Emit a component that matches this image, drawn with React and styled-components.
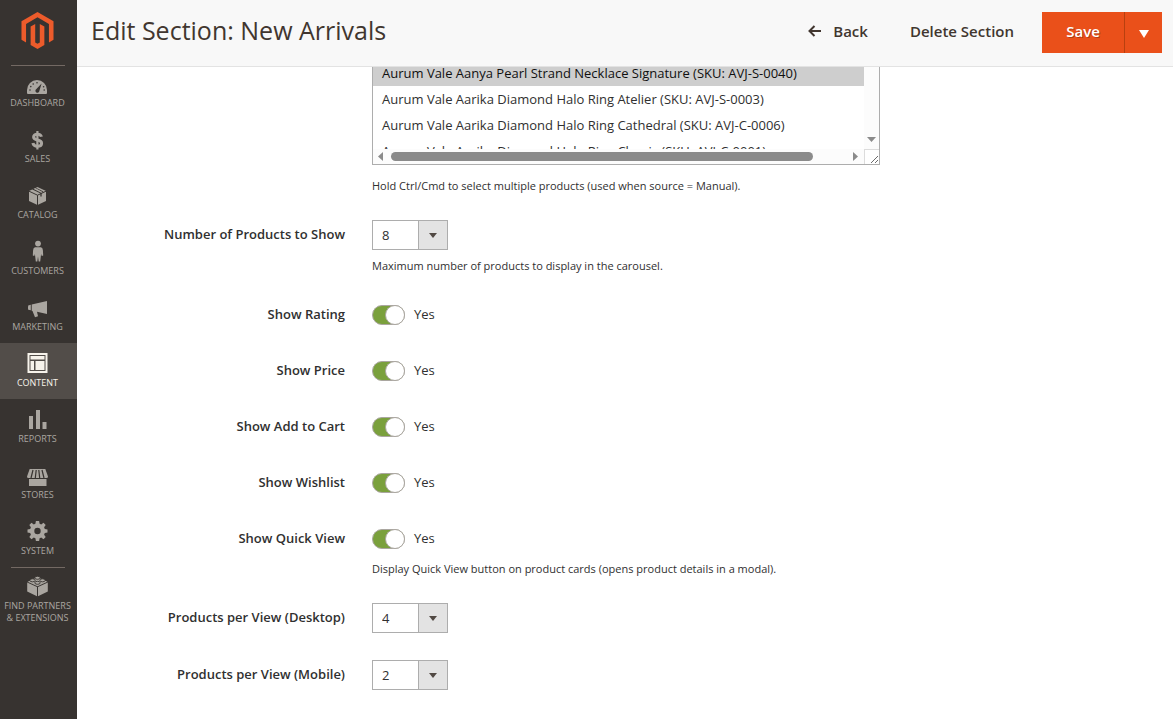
import styled, { createGlobalStyle } from "styled-components";
import { useState } from "react";

const products = [
  { sku: "AVJ-S-0040", name: "Aurum Vale Aanya Pearl Strand Necklace Signature" },
  { sku: "AVJ-S-0003", name: "Aurum Vale Aarika Diamond Halo Ring Atelier" },
  { sku: "AVJ-C-0006", name: "Aurum Vale Aarika Diamond Halo Ring Cathedral" },
  { sku: "AVJ-C-0001", name: "Aurum Vale Aarika Diamond Halo Ring Classic" },
];

const toggles = [
  { id: "show_rating", label: "Show Rating" },
  { id: "show_price", label: "Show Price" },
  { id: "show_cart", label: "Show Add to Cart" },
  { id: "show_wishlist", label: "Show Wishlist" },
  {
    id: "show_quick_view",
    label: "Show Quick View",
    note: "Display Quick View button on product cards (opens product details in a modal).",
  },
];

const menu = [
  {
    label: "Dashboard",
    icon: (
      <>
        <path d="M0 21V18a10 10 0 0 1 20 0v3q0 1-1 1H1q-1 0-1-1z" />
        <g fill="#373330">
          <circle cx="3" cy="18" r=".8" />
          <circle cx="3.8" cy="14.6" r=".8" />
          <circle cx="6.2" cy="12" r=".8" />
          <circle cx="10" cy="10.8" r=".8" />
          <circle cx="16.6" cy="14.8" r=".8" />
          <circle cx="17.2" cy="18" r=".8" />
          <path d="M14.6 11.6l-2.2 7.2a2 2 0 1 1-3-1.8z" />
        </g>
      </>
    ),
  },
  {
    label: "Sales",
    icon: (
      <g fill="none" stroke="currentColor">
        <path strokeWidth="2.2" d="M10.4 3v18.500" />
        <path strokeWidth="3" d="M14.400 8.800C14 6.800 12.600 6.200 10.400 6.200 8 6.200 6.600 7.300 6.600 9c0 4.200 8 1.800 8 6.200 0 1.900-1.700 3-4.200 3-2.600 0-4.100-1.100-4.500-3.200" />
      </g>
    ),
  },
  {
    label: "Catalog",
    icon: (
      <>
        <path d="M10.500 3L19 7v10l-8.500 4L2 17V7z" />
        <g fill="none" stroke="#373330">
          <path d="M2 7.200l8.500 4 8.500-4M10.500 11.200V21" />
          <path strokeWidth="1.300" d="M5.600 4.800l8.400 4.200v3.500M7.700 3.800l8.300 4.200" />
        </g>
        <path d="M6.700 4.900l1.700-.8L15.500 8l-1.400.8z" />
      </>
    ),
  },
  {
    label: "Customers",
    icon: (
      <>
        <circle cx="11" cy="3.600" r="2.900" />
        <path d="M8 7.200h6q1.800.3 1.900 3l.3 5.200-1.500.6-.6-2-.9 7.600h-1.500l-.7-5-.7 5H8.800L7.900 14l-.6 2-1.500-.6.300-5.200q.1-2.700 1.900-3z" />
      </>
    ),
  },
  {
    label: "Marketing",
    icon: (
      <path d="M1.200 9.400l2.600-.6v5.400l-2.600-.5q-.4-2.200 0-4.300zM4.700 8.500l15.300-3.500v13l-10-2.300 1 4.600-3 1-2.500-6.400-.8-.2z" />
    ),
  },
  {
    label: "Content",
    icon: (
      <>
        <path fillRule="evenodd" d="M.5 1h20v20H.5zM2.500 3v16h16V3z" />
        <path d="M3.500 4h14v3.500h-14zM3.500 9h3.500v9H3.500zM8.500 9h9v9h-9z" />
      </>
    ),
  },
  {
    label: "Reports",
    icon: <path d="M2 8h4v13H2zM9 2h4v19H9zM15.500 14h4v7h-4z" />,
  },
  {
    label: "Stores",
    icon: (
      <>
        <path d="M2.700 5h15.600l2.700 7.500q0 1.500-1.500 1.500h-18Q0 14 0 12.500z" />
        <path fill="none" stroke="#373330" strokeWidth="1.200" d="M6 6l-2 8M9.200 6l-.9 8M11.800 6l.9 8M15 6l2 8" />
        <path d="M2 15h17.500v7H2z" />
      </>
    ),
  },
  {
    label: "System",
    icon: (
      <path
        fillRule="evenodd"
        d="M8.900 1h3.200l.5 2.700 1.600.7L16.500 2.800l2.200 2.200-1.600 2.300.7 1.600 2.700.5v3.200l-2.700.5-.7 1.600 1.600 2.300-2.200 2.200-2.300-1.600-1.600.7-.5 2.700H8.900l-.5-2.700-1.600-.7-2.300 1.600L2.300 17l1.600-2.300-.7-1.600L.5 12.600V9.400l2.700-.5.7-1.600L2.300 5l2.200-2.200 2.300 1.600 1.600-.7zM10.500 7.800a3.200 3.200 0 1 0 0 6.400 3.200 3.200 0 0 0 0-6.400z"
      />
    ),
  },
];

const partnersIcon = (
  <>
    <path d="M.2 7.500L10 12v9.300L.2 16.600zM20.800 7.500L11 12v9.300l9.800-4.700z" />
    <path d="M10.500 2L20.400 6.700 10.500 11.300.6 6.700z" />
    <g stroke="#373330" strokeWidth=".9">
      <ellipse cx="10.500" cy="2.800" rx="2.700" ry="1.500" />
      <ellipse cx="5.500" cy="5.300" rx="2.700" ry="1.500" />
      <ellipse cx="15.500" cy="5.300" rx="2.700" ry="1.500" />
      <ellipse cx="10.500" cy="7.800" rx="2.700" ry="1.500" />
    </g>
  </>
);

function MenuIcon({ children }) {
  return (
    <svg width="21" height="22" viewBox="0 0 21 22" fill="currentColor" aria-hidden="true">
      {children}
    </svg>
  );
}

function SelectField({ id, label, note, options, initial }) {
  const [value, setValue] = useState(initial);

  return (
    <Field>
      <Label htmlFor={id}>{label}</Label>
      <Control>
        <SelectWrap>
          <Select id={id} value={value} onChange={(e) => setValue(e.target.value)}>
            {options.map((o) => (
              <option key={o} value={o}>{o}</option>
            ))}
          </Select>
          <SelectArrow />
        </SelectWrap>
        {note && <Note>{note}</Note>}
      </Control>
    </Field>
  );
}

function ToggleField({ id, label, note }) {
  const [checked, setChecked] = useState(true);

  return (
    <Field>
      <Label htmlFor={id}>{label}</Label>
      <Control>
        <ToggleRow>
          <Toggle
            type="checkbox"
            id={id}
            checked={checked}
            onChange={(e) => setChecked(e.target.checked)}
          />
          <ToggleText>{checked ? "Yes" : "No"}</ToggleText>
        </ToggleRow>
        {note && <Note>{note}</Note>}
      </Control>
    </Field>
  );
}

export default function App() {
  const [selected, setSelected] = useState(["AVJ-S-0040"]);

  function changeProducts(e) {
    setSelected(Array.from(e.target.selectedOptions, (o) => o.value));
  }

  return (
    <>
      <GlobalStyle />
      <Page>
        <Sidebar>
          <Logo href="#" aria-label="Magento">
            <svg width="37" height="37" viewBox="0 0 24 24" fill="#ec5b2b" aria-hidden="true">
              <path d="M12 24l-4.455-2.572v-12l2.970-1.715v12.001l1.485.902 1.485-.902V7.713l2.971 1.715v12zM22.391 6v12l-2.969 1.714V7.713L12 3.430 4.574 7.713v12.001L1.609 18V6L12 0z" />
            </svg>
          </Logo>
          <Divider />
          <Menu>
            {menu.map((item) => (
              <MenuItem key={item.label} href="#" $active={item.label === "Content"}>
                <MenuIcon>{item.icon}</MenuIcon>
                {item.label}
              </MenuItem>
            ))}
          </Menu>
          <Divider />
          <Partners href="#">
            <MenuIcon>{partnersIcon}</MenuIcon>
            Find Partners
            <br />
            &amp; Extensions
          </Partners>
        </Sidebar>
        <Main>
          <Header>
            <Title>Edit Section: New Arrivals</Title>
            <Actions>
              <TextButton type="button">
                <svg width="13" height="12" viewBox="0 0 13 12" fill="none" stroke="currentColor" strokeWidth="2" aria-hidden="true">
                  <path d="M6.500 1L1.500 6l5 5M1.500 6H13" />
                </svg>
                Back
              </TextButton>
              <TextButton type="button">Delete Section</TextButton>
              <SaveGroup>
                <SaveButton type="button">Save</SaveButton>
                <SaveToggle type="button" aria-label="More save options">
                  <svg width="10" height="8" viewBox="0 0 10 8" fill="#fff" aria-hidden="true">
                    <path d="M0 0h10L5 8z" />
                  </svg>
                </SaveToggle>
              </SaveGroup>
            </Actions>
          </Header>
          <Form onSubmit={(e) => e.preventDefault()}>
            <Field>
              <Control>
                <ListBox>
                  <List multiple size={4} aria-label="Products" value={selected} onChange={changeProducts}>
                    {products.map((p) => (
                      <option key={p.sku} value={p.sku}>
                        {p.name} (SKU: {p.sku})
                      </option>
                    ))}
                  </List>
                  <VerticalBar>
                    <svg width="9" height="5" viewBox="0 0 9 5" aria-hidden="true">
                      <path d="M0 0h9L4.500 5z" />
                    </svg>
                  </VerticalBar>
                  <HorizontalBar>
                    <svg width="5" height="9" viewBox="0 0 5 9" aria-hidden="true">
                      <path d="M5 0v9L0 4.500z" />
                    </svg>
                    <Track>
                      <Thumb />
                    </Track>
                    <svg width="5" height="9" viewBox="0 0 5 9" aria-hidden="true">
                      <path d="M0 0v9l5-4.500z" />
                    </svg>
                  </HorizontalBar>
                  <Grip>
                    <svg width="7" height="7" viewBox="0 0 7 7" stroke="#6b6b6b" aria-hidden="true">
                      <path d="M0 7l7-7M4 7l3-3" />
                    </svg>
                  </Grip>
                </ListBox>
                <Note>Hold Ctrl/Cmd to select multiple products (used when source = Manual).</Note>
              </Control>
            </Field>
            <SelectField
              id="products_count"
              label="Number of Products to Show"
              note="Maximum number of products to display in the carousel."
              options={["4", "6", "8", "12"]}
              initial="8"
            />
            {toggles.map((t) => (
              <ToggleField key={t.id} {...t} />
            ))}
            <SelectField
              id="per_view_desktop"
              label="Products per View (Desktop)"
              options={["2", "3", "4", "5"]}
              initial="4"
            />
            <SelectField
              id="per_view_mobile"
              label="Products per View (Mobile)"
              options={["1", "2"]}
              initial="2"
            />
          </Form>
        </Main>
      </Page>
    </>
  );
}

const GlobalStyle = createGlobalStyle`
  *, *::before, *::after {
    box-sizing: border-box;
  }
  body {
    margin: 0;
    background: #fff;
    color: #303030;
    font-family: "Open Sans", "Noto Sans", sans-serif;
    font-size: 13px;
  }
  button, select, input {
    font: inherit;
    color: inherit;
  }
`;

const Page = styled.div`
  display: flex;
  min-height: 100vh;
`;

const Sidebar = styled.aside`
  flex: none;
  width: 77px;
  background: #373330;
  display: flex;
  flex-direction: column;
`;

const Logo = styled.a`
  display: flex;
  justify-content: center;
  padding: 12px 2px 16px 0;
`;

const Divider = styled.div`
  height: 1px;
  margin: 0 12px 0 11px;
  background: #736963;
`;

const Menu = styled.nav`
  display: flex;
  flex-direction: column;

  a:first-child {
    height: 53px;
  }
`;

const MenuItem = styled.a`
  height: 56px;
  padding: 0 2px 10px 0;
  display: flex;
  flex-direction: column;
  align-items: center;
  justify-content: flex-end;
  gap: 3px;
  font-size: 9px;
  line-height: 12px;
  text-align: center;
  text-decoration: none;
  text-transform: uppercase;
  color: ${(p) => (p.$active ? "#f7f3eb" : "#aaa6a0")};
  background: ${(p) => (p.$active ? "#524d49" : "transparent")};

  svg {
    flex: none;
  }
`;

const Partners = styled.a`
  padding: 7px 2px 10px 0;
  font-size: 9px;
  line-height: 12px;
  text-align: center;
  text-decoration: none;
  text-transform: uppercase;
  white-space: nowrap;
  color: #aaa6a0;

  svg {
    display: block;
    margin: 0 auto 3px;
  }
`;

const Main = styled.main`
  flex: 1;
  min-width: 0;
`;

const Header = styled.header`
  position: sticky;
  top: 0;
  z-index: 1;
  height: 67px;
  padding: 12px 11px 0 14px;
  display: flex;
  align-items: flex-start;
  justify-content: space-between;
  background: #f8f8f8;
  border-bottom: 1px solid #e3e3e3;
`;

const Title = styled.h1`
  margin: 0;
  font-size: 25px;
  font-weight: 400;
  line-height: 37px;
  color: #41362f;
`;

const Actions = styled.div`
  display: flex;
  align-items: center;
  gap: 14px;
`;

const TextButton = styled.button`
  padding: 0 14px 3px;
  display: flex;
  align-items: center;
  gap: 12px;
  border: none;
  background: none;
  font-size: 15px;
  font-weight: 600;
  line-height: 20px;
  color: #41362f;
  cursor: pointer;
`;

const SaveGroup = styled.div`
  height: 41px;
  display: flex;
`;

const SaveButton = styled.button`
  width: 82px;
  padding: 0 0 3px;
  border: none;
  background: #ea501a;
  font-size: 15px;
  font-weight: 600;
  color: #fff;
  text-shadow: 1px 1px 0 rgba(0, 0, 0, 0.25);
  cursor: pointer;
`;

const SaveToggle = styled.button`
  width: 38px;
  padding: 0;
  border: none;
  border-left: 1px solid #b8400f;
  background: #ea501a;
  cursor: pointer;
`;

/* the list continues under the sticky header */
const Form = styled.form`
  margin-top: -7px;
  padding-bottom: 27px;
  display: flex;
  flex-direction: column;
  gap: 27px;
`;

const Field = styled.div`
  display: grid;
  grid-template-columns: 268fr 508fr 266fr;
  column-gap: 27px;
`;

const Label = styled.label`
  font-weight: 600;
  line-height: 29px;
  text-align: right;
`;

const Control = styled.div`
  grid-column: 2;
  min-width: 0;
`;

const Note = styled.p`
  margin: 8px 0 0;
  font-size: 11px;
  line-height: 15px;
`;

const ListBox = styled.div`
  margin-bottom: 13px;
  display: grid;
  grid-template-columns: 1fr 15px;
  grid-template-rows: 89px 15px;
  border: 1px solid #adadad;
  border-top: none;
`;

const List = styled.select`
  min-width: 0;
  height: 89px;
  padding: 0;
  border: none;
  outline: none;
  background: #fff;
  overflow: hidden;

  option {
    min-height: 26px;
    padding: 4px 9px;
    line-height: 18px;
  }
`;

const VerticalBar = styled.div`
  padding-bottom: 7px;
  display: flex;
  justify-content: center;
  align-items: flex-end;
  background: #fcfcfc;
  fill: #8b8b8b;
`;

const HorizontalBar = styled.div`
  padding: 0 6px 0 5px;
  display: flex;
  align-items: center;
  gap: 8px;
  background: #fcfcfc;
  fill: #8b8b8b;
`;

const Track = styled.div`
  flex: 1;
`;

const Thumb = styled.div`
  width: 93%;
  height: 9px;
  border-radius: 5px;
  background: #8b8b8b;
`;

const Grip = styled.div`
  display: flex;
  align-items: flex-end;
  justify-content: flex-end;
  padding: 0 1px 1px 0;
  border-top: 1px solid #dcdcdc;
  border-left: 1px solid #dcdcdc;
`;

const SelectWrap = styled.div`
  width: 76px;
  height: 30px;
  display: grid;
  grid-template-columns: 1fr 29px;
  border: 1px solid #adadad;
`;

const Select = styled.select`
  grid-row: 1;
  grid-column: 1 / 3;
  padding: 0 9px;
  appearance: none;
  border: none;
  border-radius: 0;
  background: #fff;
  font-size: 13px;
`;

const SelectArrow = styled.span`
  grid-row: 1;
  grid-column: 2;
  display: flex;
  align-items: center;
  justify-content: center;
  border-left: 1px solid #adadad;
  background: #e3e3e3;
  pointer-events: none;

  &::after {
    content: "";
    border: 4px solid transparent;
    border-top: 5px solid #514943;
    border-bottom: none;
  }
`;

const ToggleRow = styled.div`
  height: 29px;
  padding-top: 1px;
  display: flex;
  align-items: center;
  gap: 9px;
`;

const ToggleText = styled.span`
  padding-bottom: 2px;
  line-height: 18px;
`;

const Toggle = styled.input`
  appearance: none;
  width: 33px;
  height: 20px;
  margin: 0;
  display: flex;
  justify-content: ${(p) => (p.checked ? "flex-end" : "flex-start")};
  border: 1px solid #aaa6a0;
  border-radius: 10px;
  background: ${(p) => (p.checked ? "#7aa03c" : "#e3e3e3")};
  cursor: pointer;

  &::before {
    content: "";
    flex: none;
    width: 20px;
    height: 20px;
    margin: -1px;
    border: 1px solid #aaa6a0;
    border-radius: 50%;
    background: #fff;
  }
`;
